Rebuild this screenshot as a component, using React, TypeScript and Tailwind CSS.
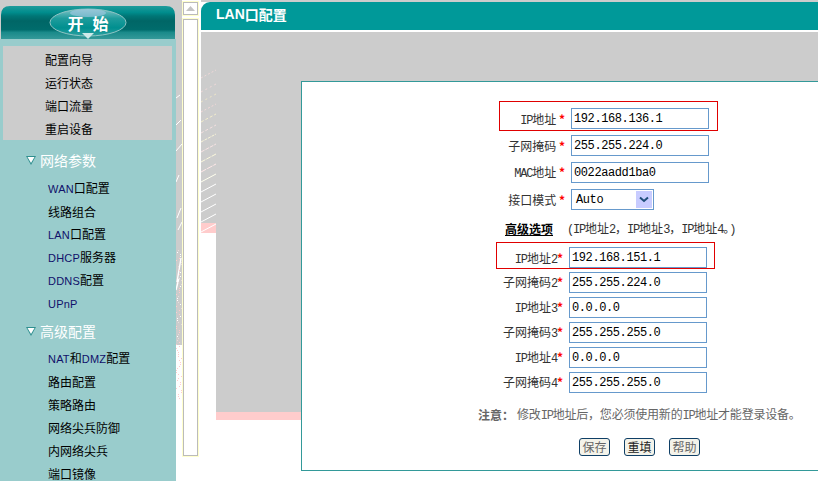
const CJK = "font-['Noto_Sans_CJK_SC',sans-serif]"

const mainItems = ['配置向导', '运行状态', '端口流量', '重启设备']
const netItems = ['WAN口配置', '线路组合', 'LAN口配置', 'DHCP服务器', 'DDNS配置', 'UPnP']
const advItems = ['NAT和DMZ配置', '路由配置', '策略路由', '网络尖兵防御', '内网络尖兵', '端口镜像']

// SimSun style mixed text: latin runs get their own face, cjk stays full width
function Mixed({ text, latin }: { text: string; latin: string }) {
  const parts = text.split(/([A-Za-z0-9.]+)/)
  return (
    <>
      {parts.map((p, i) =>
        /^[A-Za-z0-9.]+$/.test(p) ? (
          <span key={i} className={latin}>{p}</span>
        ) : (
          <span key={i}>{p}</span>
        )
      )}
    </>
  )
}

function Banner() {
  return (
    <div className="relative h-[33px] shrink-0 mx-[1px] w-[174px]">
      <svg width="174" height="33" className="absolute left-0 top-0">
        <defs>
          <linearGradient id="bar" x1="0" y1="0" x2="0" y2="1">
            <stop offset="0" stopColor="#1f9c9c" />
            <stop offset="0.2" stopColor="#008c8c" />
            <stop offset="0.3" stopColor="#007777" />
            <stop offset="0.45" stopColor="#006666" />
            <stop offset="0.72" stopColor="#006c6c" />
            <stop offset="0.8" stopColor="#1a8a8a" />
            <stop offset="1" stopColor="#339999" />
          </linearGradient>
          <linearGradient id="oval" x1="0" y1="0" x2="0" y2="1">
            <stop offset="0" stopColor="#7fc4c8" />
            <stop offset="0.35" stopColor="#1f9c9c" />
            <stop offset="0.7" stopColor="#008f8f" />
            <stop offset="1" stopColor="#2fa0a0" />
          </linearGradient>
        </defs>
        <path d="M0 33V9Q0 0 9 0H165Q174 0 174 9V33Z" fill="url(#bar)" />
        <ellipse cx="87" cy="16.5" rx="38" ry="13.5" fill="url(#oval)" stroke="#8fc4c4" strokeWidth="1" />
        <ellipse cx="87" cy="7" rx="18" ry="4" fill="#a9c9e4" opacity="0.6" />
        <path d="M81 27H93L87 33Z" fill="#cfeaea" />
      </svg>
      <div className={`absolute inset-0 flex items-center justify-center gap-[9px] pt-[1px] text-white font-bold text-[16px] ${CJK}`}>
        <span>开</span>
        <span>始</span>
      </div>
    </div>
  )
}

function SideLink({ text }: { text: string }) {
  return (
    <div className={`h-[23px] pl-[48px] flex items-center text-[12px] text-black ${CJK}`}>
      <span className="whitespace-nowrap"><Mixed text={text} latin="font-['Liberation_Sans',sans-serif] text-[11px] tracking-[0.2px] text-[#10106a]" /></span>
    </div>
  )
}

function SideHead({ text, className }: { text: string; className: string }) {
  return (
    <div className={`h-[24px] pl-[26px] flex items-center gap-[4px] text-[14px] text-white ${CJK} ${className}`}>
      <svg width="10" height="9" viewBox="0 0 10 9">
        <path d="M0 0H10L5 9Z" fill="#2f8f8f" />
        <path d="M1.5 1H8.5L5 7Z" fill="#fff" />
      </svg>
      <span>{text}</span>
    </div>
  )
}

function Sidebar() {
  return (
    <div className="w-[176px] shrink-0 flex flex-col bg-[#cccccc] pt-[6px]">
      <Banner />
      <div className="flex-1 min-h-0 overflow-hidden bg-[#99cccc] pt-[7px]">
        <div className="mx-[3px] h-[94px] w-[169px] bg-[#cccccc] pt-[2px]">
          {mainItems.map((t) => (
            <div key={t} className={`h-[23px] pl-[42px] flex items-center text-[12px] text-black ${CJK}`}>{t}</div>
          ))}
        </div>
        <SideHead text="网络参数" className="mt-[8px]" />
        <div className="mt-[5px]">
          {netItems.map((t) => <SideLink key={t} text={t} />)}
        </div>
        <SideHead text="高级配置" className="mt-[4px]" />
        <div className="mt-[4px]">
          {advItems.map((t) => <SideLink key={t} text={t} />)}
        </div>
      </div>
    </div>
  )
}

// gutter between the menu and the scrollbar, leftover background speckle
function Gutter() {
  const marks: { x: number; y: number; c: string }[] = []
  let seed = 17
  for (let y = 250; y < 400; y += 2) {
    seed = (seed * 73 + 41) % 257
    marks.push({
      x: seed % 6,
      y,
      c: seed % 3 === 0 ? '#ffcccc' : y < 340 && seed % 3 === 1 ? '#ffffff' : y < 345 ? '#e8dcdc' : '#ffcccc',
    })
  }
  return (
    <svg width="6" height="481" className="shrink-0 block">
      <rect width="6" height="345" fill="#cccccc" />
      <path d="M0 98L4 95M0 125L5 120M0 151L6 144M0 182L3 175M1 218L5 208M2 230L6 222" stroke="#ffffff" strokeWidth="1" fill="none" />
      <path d="M1 282L5 258M0 290L3 278" stroke="#ffffff" strokeWidth="1.4" fill="none" />
      {marks.map((m, i) => <rect key={i} x={m.x} y={m.y} width="1" height="1" fill={m.c} />)}
    </svg>
  )
}

function Scrollbar() {
  return (
    <div className="w-[17px] shrink-0 pt-[1px] flex flex-col gap-[2px] bg-white">
      <div className="h-[15px] border border-[#ffffcc] bg-[#ffffcc]">
        <div className="h-full border border-[#bbbbbb] bg-white flex items-center justify-center">
          <svg width="9" height="5"><path d="M0 5L4.5 0L9 5Z" fill="#c4c4c4" /></svg>
        </div>
      </div>
      <div className="h-[439px] border border-[#ffffcc]">
        <div className="h-full border border-[#bbbbbb] bg-white" />
      </div>
    </div>
  )
}

function StripeColumn() {
  const lines: { y: number; c: string; dash?: string }[] = [
    { y: 78, c: '#eed8d8', dash: '2 2' },
    { y: 92, c: '#eed8d8', dash: '2 3' },
    { y: 102, c: '#eee6c8', dash: '2 3' },
    { y: 112, c: '#f2d8d8', dash: '2 2' },
    { y: 122, c: '#f4eecc', dash: '3 2' },
    { y: 133, c: '#f4e0e0', dash: '3 2' },
    { y: 142, c: '#f8f4d8', dash: '3 1' },
    { y: 152, c: '#f8e4e4', dash: '4 1' },
    { y: 162, c: '#fbf8dc', dash: '5 1' },
    { y: 172, c: '#ffe8e8', dash: '6 1' },
    { y: 182, c: '#ffffee' },
    { y: 192, c: '#ffffff' },
    { y: 202, c: '#ffffff' },
    { y: 212, c: '#ffffff' },
    { y: 222, c: '#ffffff' },
    { y: 232, c: '#ffffff' },
  ]
  return (
    <svg width="15" height="201" className="block">
      <rect width="15" height="191" fill="#cccccc" />
      <rect y="191" width="15" height="10" fill="#ffcccc" />
      {lines.map((l) => (
        <line key={l.y} x1="0" y1={l.y - 32} x2="15" y2={l.y - 40} stroke={l.c} strokeWidth="1" strokeDasharray={l.dash} />
      ))}
    </svg>
  )
}

const fieldBox = "w-[138px] h-[21px] border border-[#6699cc] bg-white pl-[2px] flex items-center text-black text-[12px] tracking-[-0.4px] font-['Liberation_Mono',monospace]"
const labelText = "text-[12px] text-[#333333] text-right whitespace-nowrap " + CJK
const latinLabel = "font-['Liberation_Mono',monospace] text-[12px] tracking-[-1.2px]"

function Label({ text, star, width }: { text: string; star: string; width: string }) {
  return (
    <div className={`${width} ${labelText}`}>
      <Mixed text={text} latin={latinLabel} />
      <span className="text-[#ff0000] font-bold">{star}</span>
    </div>
  )
}

function Row({ text, value, top }: { text: string; value: string; top: string }) {
  return (
    <div className={`flex items-center ${top}`}>
      <Label text={text} star=" *" width="w-[263px]" />
      <div className={`ml-[6px] ${fieldBox}`}>{value}</div>
    </div>
  )
}

function Row2({ text, value }: { text: string; value: string }) {
  return (
    <div className="flex items-center mt-[4px] first:mt-[3px]">
      <Label text={text} star="*" width="w-[261px]" />
      <div className={`ml-[6px] ${fieldBox}`}>{value}</div>
    </div>
  )
}

function Btn({ text, dark }: { text: string; dark?: boolean }) {
  return (
    <div
      className={`w-[31px] h-[18px] rounded-[3px] border border-[#0f3f66] bg-[#f4f3ea] flex items-center justify-center text-[12px] ${CJK} ${dark ? 'text-[#222222]' : 'text-[#666666]'}`}
    >
      {text}
    </div>
  )
}

function ConfigPanel() {
  return (
    <div className="h-[390px] bg-white border-l border-t border-b border-[#339999] pt-[19px]">
      <div className="ml-[197px] w-[219px] h-[30px] border border-[#e00000] pt-[6px] flex">
        <Label text="IP地址" star=" *" width="w-[65px] mt-[2px]" />
        <div className={`ml-[6px] ${fieldBox}`}>192.168.136.1</div>
      </div>
      <Row text="子网掩码" value="255.255.224.0" top="mt-[4px]" />
      <Row text="MAC地址" value="0022aadd1ba0" top="mt-[6px]" />
      <div className="flex items-center mt-[6px]">
        <Label text="接口模式" star=" *" width="w-[263px]" />
        <div className="ml-[6px] w-[83px] h-[21px] border border-[#6699cc] bg-white pl-[4px] pr-[1px] flex items-center justify-between text-black text-[12px] tracking-[-0.4px] font-['Liberation_Mono',monospace]">
          <span>Auto</span>
          <div className="w-[16px] h-[17px] bg-[#c8ccff] flex items-center justify-center">
            <svg width="10" height="7" viewBox="0 0 10 7"><path d="M1 1.5L5 5L9 1.5" stroke="#1f4e79" strokeWidth="2" fill="none" /></svg>
          </div>
        </div>
      </div>
      <div className={`flex items-center mt-[10px] h-[18px] text-[12px] text-[#333333] whitespace-nowrap ${CJK}`}>
        <span className="ml-[203px] font-bold text-black underline">高级选项</span>
        <span className="ml-[14px]">
          <span className={latinLabel}>(</span>
          <Mixed text={'IP地址2\uFF0CIP地址3\uFF0CIP地址4\u3002'} latin={latinLabel} />
          <span className={latinLabel}>)</span>
        </span>
      </div>
      <div className="ml-[194px] w-[219px] h-[27px] border border-[#e00000] pt-[4px] mt-[4px] flex">
        <Label text="IP地址2" star="*" width="w-[66px] mt-[2px]" />
        <div className={`ml-[6px] ${fieldBox}`}>192.168.151.1</div>
      </div>
      <div>
        <Row2 text="子网掩码2" value="255.255.224.0" />
        <Row2 text="IP地址3" value="0.0.0.0" />
        <Row2 text="子网掩码3" value="255.255.255.0" />
        <Row2 text="IP地址4" value="0.0.0.0" />
        <Row2 text="子网掩码4" value="255.255.255.0" />
      </div>
      <div className={`mt-[13px] ml-[176px] h-[18px] flex items-center text-[12px] text-[#666666] whitespace-nowrap ${CJK}`}>
        <span className="font-bold">{'注意\uFF1A'}</span>
        <span className="ml-[3px] tracking-[-0.2px]"><Mixed text={'修改IP地址后\uFF0C您必须使用新的IP地址才能登录设备\u3002'} latin={latinLabel} /></span>
      </div>
      <div className="mt-[14px] ml-[277px] flex gap-[14px]">
        <Btn text="保存" />
        <Btn text="重填" dark />
        <Btn text="帮助" />
      </div>
    </div>
  )
}

export default function App() {
  return (
    <div className="flex w-[818px] h-[481px] overflow-hidden bg-white font-['Liberation_Sans',sans-serif]">
      <Sidebar />
      <Gutter />
      <Scrollbar />
      <div className="w-[2px] shrink-0" />
      <div className="flex-1 flex flex-col">
        <div className="h-[2px] bg-[#cccccc]" />
        <div className="h-[28px] bg-[#009999] rounded-tl-[9px] pl-[15px] pb-[4px] flex items-center text-white font-bold text-[14px]">
          <span>LAN</span>
          <span className={CJK}>口配置</span>
        </div>
        <div className="h-[2px] bg-white" />
        <div className="flex-1 flex">
          <div className="w-[15px]">
            <StripeColumn />
          </div>
          <div className="w-[85px]">
            <div className="h-[380px] bg-[#cccccc]" />
            <div className="h-[8px] bg-[#ffcccc]" />
          </div>
          <div className="flex-1">
            <div className="h-[49px] bg-[#cccccc]" />
            <ConfigPanel />
          </div>
        </div>
      </div>
    </div>
  )
}
